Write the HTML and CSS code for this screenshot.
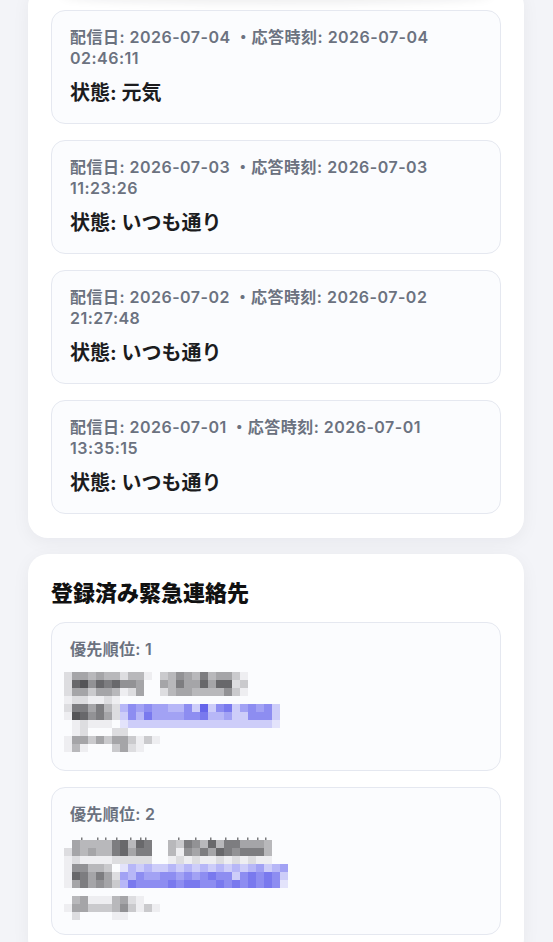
FILE: index.html
```html
<!DOCTYPE html>
<html lang="ja">
<head>
<meta charset="utf-8">
<meta name="viewport" content="width=device-width, initial-scale=1">
<title>応答履歴と緊急連絡先</title>
<link rel="stylesheet" href="styles.css">
</head>
<body>
<div class="top-shade"></div>
<main class="page">
  <section class="panel">
    <ul class="history-list">
      <li class="entry">
        <p class="entry-meta">配信日: 2026-07-04 ・応答時刻: 2026-07-04 02:46:11</p>
        <p class="entry-status">状態: 元気</p>
      </li>
      <li class="entry">
        <p class="entry-meta">配信日: 2026-07-03 ・応答時刻: 2026-07-03 11:23:26</p>
        <p class="entry-status">状態: いつも通り</p>
      </li>
      <li class="entry">
        <p class="entry-meta">配信日: 2026-07-02 ・応答時刻: 2026-07-02 21:27:48</p>
        <p class="entry-status">状態: いつも通り</p>
      </li>
      <li class="entry">
        <p class="entry-meta">配信日: 2026-07-01 ・応答時刻: 2026-07-01 13:35:15</p>
        <p class="entry-status">状態: いつも通り</p>
      </li>
    </ul>
  </section>

  <section class="panel">
    <h2 class="panel-title">登録済み緊急連絡先</h2>
    <ul class="contact-list">
      <li class="contact">
        <p class="contact-priority">優先順位: 1</p>
        <svg class="mosaic mosaic-1" viewBox="0 0 216 82" aria-label="非表示の連絡先情報"
          data-rows="25545442441.34654745531|2896878665..54755858823|2553554125..24554444631|1221121|2775742cededdccebgbefbdedeb|1986752becfddddeefccdbbeeeb|.12111.abbbbbbbbbbbbbbbbbba|.12...22|155353553131|141...3521"></svg>
      </li>
      <li class="contact">
        <p class="contact-priority">優先順位: 2</p>
        <svg class="mosaic mosaic-2" viewBox="0 0 224 86" aria-label="非表示の連絡先情報"
          data-rows="|.5444478487..4376484775554|25454478577..4165758767774|12111122222..1212112121211|166443.acbcbbcbcbcbcbcbcdbcd|1875752dceddeededefeebefefeb|1575653cfeeeefeffeefefefefea||.451114521|155333463131|.2....11"
          data-dots="17,33,41,52,66,76,81,114,131,146,161,173,183,193,201"></svg>
      </li>
    </ul>
  </section>
</main>
<script src="script.js"></script>
</body>
</html>
```

FILE: styles.css
```css
* {
  box-sizing: border-box;
}

html,
body {
  margin: 0;
}

body {
  background: #f3f4f8;
  padding: 0 29px 40px 28px;
  font-family: Inter, "Noto Sans CJK JP", "Noto Sans", sans-serif;
  color: #1a1a1a;
  overflow: hidden;
}

.top-shade {
  position: fixed;
  top: -14px;
  left: 60px;
  right: 60px;
  height: 14px;
  border-radius: 50%;
  box-shadow: 0 3px 10px rgba(30, 30, 40, 0.08);
  z-index: 5;
}

.page {
  margin-top: -14px;
  display: flex;
  flex-direction: column;
  gap: 16px;
}

.panel {
  background: #ffffff;
  border-radius: 20px;
  padding: 24px 23px;
  box-shadow: 0 4px 18px rgba(20, 24, 40, 0.05);
}

.history-list,
.contact-list {
  list-style: none;
  margin: 0;
  padding: 0;
  display: flex;
  flex-direction: column;
  gap: 16px;
}

.entry,
.contact {
  background: #fbfcfe;
  border: 1px solid #e5e8f0;
  border-radius: 14px;
  padding: 16px 18px;
}

.entry-meta {
  margin: 0;
  font-size: 16px;
  line-height: 21px;
  font-weight: 600;
  letter-spacing: 0.03em;
  color: #6b7280;
}

.entry-status {
  margin: 10px 0 0;
  font-size: 20px;
  line-height: 28px;
  font-weight: 700;
  color: #1c1c1e;
}

.panel-title {
  margin: 0 0 14px;
  font-size: 22px;
  line-height: 30px;
  font-weight: 800;
  color: #111111;
}

.contact-priority {
  margin: 0;
  font-size: 16px;
  line-height: 21px;
  font-weight: 600;
  letter-spacing: 0.02em;
  color: #6b7280;
}

.mosaic {
  display: block;
  margin-left: -6px;
  overflow: visible;
}

.mosaic-1 {
  width: 216px;
  height: 82px;
  margin-top: 12px;
}

.mosaic-2 {
  width: 224px;
  height: 86px;
  margin-top: 7px;
}
```

FILE: script.js
```js
(function () {
  var shades = {
    '1': '#eeeef1', '2': '#dddde0', '3': '#cacacd', '4': '#b8b8bb',
    '5': '#a5a5a8', '6': '#929295', '7': '#7d7d80', '8': '#68686b', '9': '#545457',
    'a': '#e3e3fb', 'b': '#cdcdf9', 'c': '#b7b7f7', 'd': '#a2a2f4',
    'e': '#8d8df1', 'f': '#7979ee', 'g': '#6565ea'
  };
  var NS = 'http://www.w3.org/2000/svg';
  function rect(svg, x, y, w, h, fill) {
    var r = document.createElementNS(NS, 'rect');
    r.setAttribute('x', x);
    r.setAttribute('y', y);
    r.setAttribute('width', w);
    r.setAttribute('height', h);
    r.setAttribute('fill', fill);
    svg.appendChild(r);
  }
  var list = document.querySelectorAll('.mosaic');
  for (var i = 0; i < list.length; i++) {
    var svg = list[i];
    var rows = (svg.getAttribute('data-rows') || '').split('|');
    for (var y = 0; y < rows.length; y++) {
      var row = rows[y];
      for (var x = 0; x < row.length; x++) {
        var fill = shades[row.charAt(x)];
        if (fill) rect(svg, x * 8, y * 8, 8, 8, fill);
      }
    }
    var dots = (svg.getAttribute('data-dots') || '').split(',');
    for (var d = 0; d < dots.length; d++) {
      if (dots[d] !== '') rect(svg, parseFloat(dots[d]), 5.5, 1.5, 2.5, '#7a7a7d');
    }
  }
})();
```
